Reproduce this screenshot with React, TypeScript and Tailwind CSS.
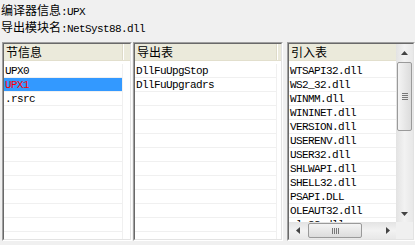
import React from 'react';

const sections = ['UPX0', 'UPX1', '.rsrc'];
const exportsList = ['DllFuUpgStop', 'DllFuUpgradrs'];
const imports = [
  'WTSAPI32.dll',
  'WS2_32.dll',
  'WINMM.dll',
  'WININET.dll',
  'VERSION.dll',
  'USERENV.dll',
  'USER32.dll',
  'SHLWAPI.dll',
  'SHELL32.dll',
  'PSAPI.DLL',
  'OLEAUT32.dll',
  'ole32.dll',
];

const cjk = "font-['Noto_Sans_CJK_SC',sans-serif] text-[12px]";
const mono = "font-['Liberation_Mono',monospace] text-[11px] tracking-[-0.6px]";

function Rows({ items, count, colClass, selected }: { items: string[]; count: number; colClass: string; selected?: number }) {
  const rows = Array.from({ length: count }, (_, i) => items[i] ?? '');
  return (
    <div className="pt-[3px]">
      {rows.map((r, i) => (
        <div
          key={i}
          className={`${colClass} h-[14px] border-b border-r border-[#f0f0f0] ${mono} leading-[13px] pl-[1px] pt-[1px] whitespace-nowrap ${
            selected === i ? 'bg-[#3399ff] text-[#ff0000]' : 'text-black'
          }`}
        >
          {r}
        </div>
      ))}
    </div>
  );
}

function Header({ title, colClass }: { title: string; colClass: string }) {
  return (
    <div className="flex h-[17px] bg-[#ebeadb] border-b border-[#e2dfcd]">
      <div className={`${colClass} shrink-0 h-full border-r border-[#dedbc9] ${cjk} leading-[16px] pl-[2px] text-black`}>
        {title}
      </div>
      <div className="flex-1 border-l border-white" />
    </div>
  );
}

function Frame({ className, children }: { className: string; children: React.ReactNode }) {
  return (
    <div className={`${className} flex border border-t-[#a0a0a0] border-l-[#a0a0a0] border-r-white border-b-white`}>
      <div className="flex-1 min-w-0 flex border border-t-[#696969] border-l-[#696969] border-r-[#e3e3e3] border-b-[#e3e3e3] bg-white overflow-hidden">
        {children}
      </div>
    </div>
  );
}

function VScroll() {
  return (
    <div className="w-[17px] shrink-0 flex flex-col bg-gradient-to-r from-[#e3e3e3] via-[#f2f2f2] to-[#e8e8e8]">
      <div className="h-[17px] flex items-center justify-center">
        <svg width="7" height="4" viewBox="0 0 7 4"><path d="M3.5 0 L7 4 L0 4 Z" fill="#444" /></svg>
      </div>
      <div className="mt-[1px] mx-[1px] h-[69px] rounded-[2px] border border-[#9a9a9a] bg-gradient-to-r from-[#f4f4f4] to-[#dcdcdc] flex flex-col items-center justify-center gap-[1px]">
        <div className="w-[6px] h-[1px] bg-[#777]" />
        <div className="w-[6px] h-[1px] bg-[#777]" />
        <div className="w-[6px] h-[1px] bg-[#777]" />
        <div className="w-[6px] h-[1px] bg-[#777]" />
      </div>
      <div className="flex-1" />
      <div className="h-[17px] flex items-center justify-center">
        <svg width="7" height="4" viewBox="0 0 7 4"><path d="M0 0 L7 0 L3.5 4 Z" fill="#444" /></svg>
      </div>
    </div>
  );
}

function HScroll() {
  return (
    <div className="h-[17px] flex bg-gradient-to-b from-[#e3e3e3] via-[#f2f2f2] to-[#e8e8e8]">
      <div className="w-[17px] flex items-center justify-center">
        <svg width="4" height="7" viewBox="0 0 4 7"><path d="M0 3.5 L4 0 L4 7 Z" fill="#444" /></svg>
      </div>
      <div className="my-[1px] ml-[2px] w-[54px] rounded-[2px] border border-[#9a9a9a] bg-gradient-to-b from-[#f4f4f4] to-[#dcdcdc] flex items-center justify-center gap-[1px]">
        <div className="w-[1px] h-[6px] bg-[#777]" />
        <div className="w-[1px] h-[6px] bg-[#777]" />
        <div className="w-[1px] h-[6px] bg-[#777]" />
        <div className="w-[1px] h-[6px] bg-[#777]" />
      </div>
      <div className="flex-1" />
      <div className="w-[17px] flex items-center justify-center">
        <svg width="4" height="7" viewBox="0 0 4 7"><path d="M0 0 L4 3.5 L0 7 Z" fill="#444" /></svg>
      </div>
    </div>
  );
}

export default function App() {
  return (
    <div className="w-[415px] h-[245px] bg-[#f0f0f0] overflow-hidden text-black">
      <div className="pt-[1px] pl-[1px]">
        <div className="h-[17px] leading-[17px] whitespace-nowrap">
          <span className={cjk}>编译器信息</span>
          <span className={mono}>:UPX</span>
        </div>
        <div className="h-[17px] leading-[17px] whitespace-nowrap">
          <span className={cjk}>导出模块名</span>
          <span className={mono}>:NetSyst88.dll</span>
        </div>
      </div>

      <div className="flex mt-[7px] h-[199px]">
        <Frame className="ml-[2px] w-[130px]">
          <div className="flex-1 min-w-0">
            <Header title="节信息" colClass="w-[119px]" />
            <Rows items={sections} count={13} colClass="w-[119px]" selected={1} />
          </div>
        </Frame>

        <Frame className="ml-[1px] w-[150px]">
          <div className="flex-1 min-w-0">
            <Header title="导出表" colClass="w-[142px]" />
            <Rows items={exportsList} count={13} colClass="w-[142px]" />
          </div>
        </Frame>

        <Frame className="ml-[4px] w-[128px]">
          <div className="flex-1 min-w-0 flex flex-col">
            <div className="flex-1 min-h-0 flex">
              <div className="flex-1 min-w-0 overflow-hidden">
                <div className="w-[160px]">
                  <Header title="引入表" colClass="w-[160px]" />
                  <Rows items={imports} count={12} colClass="w-[160px]" />
                </div>
              </div>
              <VScroll />
            </div>
            <div className="flex">
              <div className="flex-1">
                <HScroll />
              </div>
              <div className="w-[17px] h-[17px] bg-[#f0f0f0]" />
            </div>
          </div>
        </Frame>
      </div>
    </div>
  );
}
